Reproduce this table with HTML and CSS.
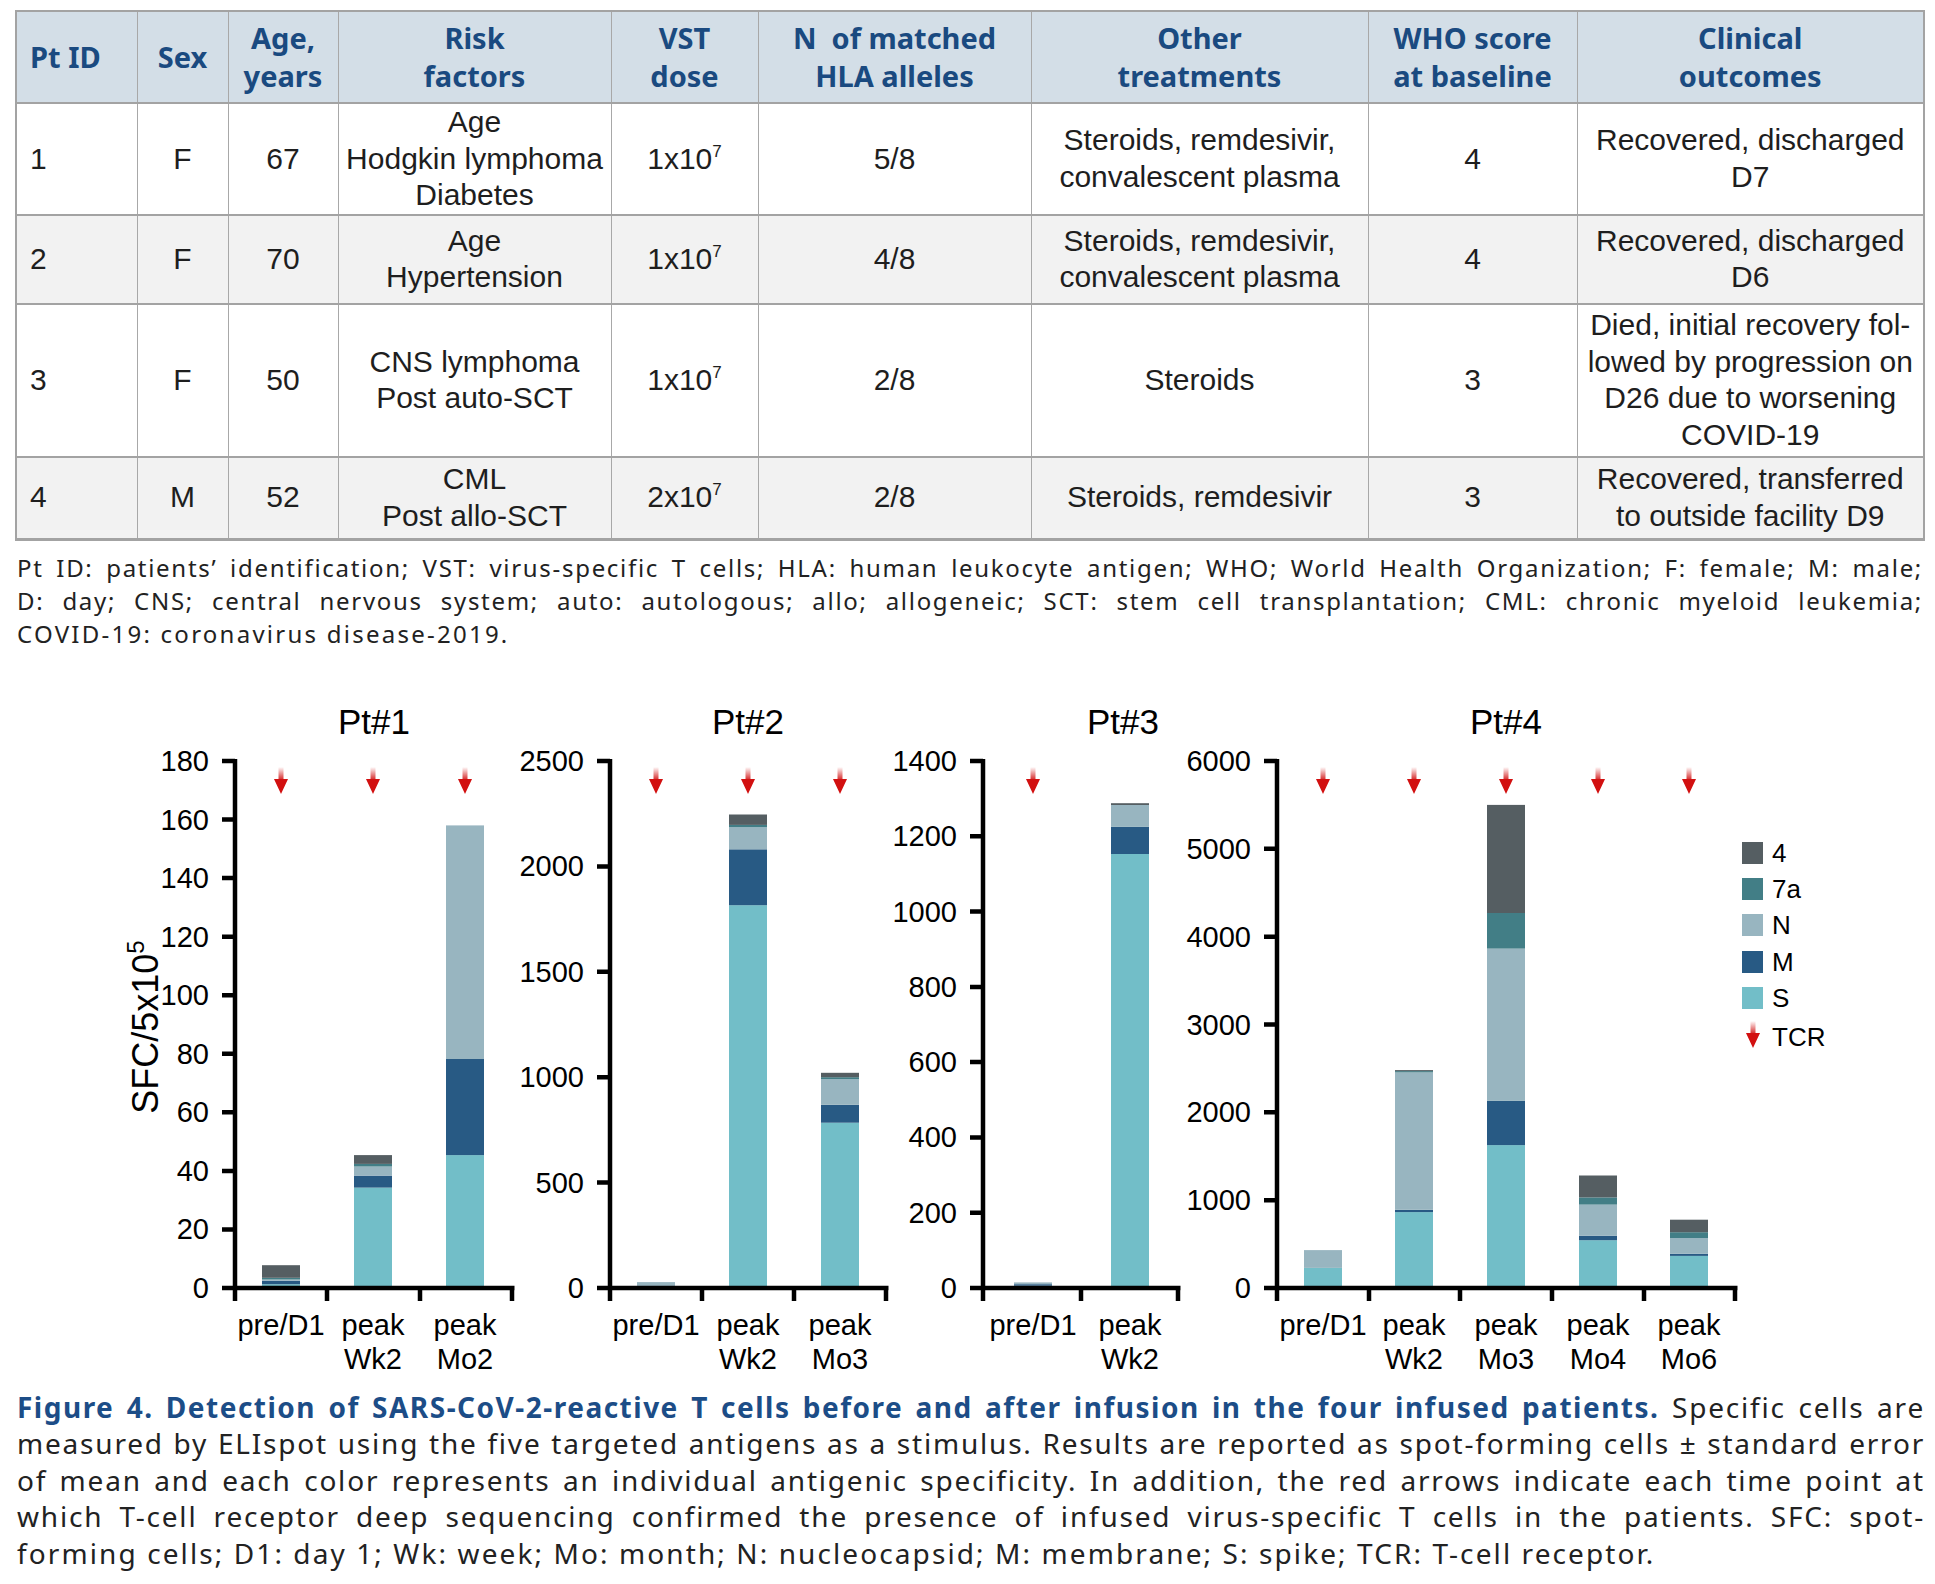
FILE: index.html
```html
<!DOCTYPE html>
<html>
<head>
<meta charset="utf-8">
<link rel="stylesheet" href="styles.css">
</head>
<body>
<div class="page">
  <table class="pt">
    <colgroup>
      <col class="w1"><col class="w2"><col class="w3"><col class="w4"><col class="w5"><col class="w6"><col class="w7"><col class="w8"><col class="w9">
    </colgroup>
    <thead>
      <tr class="hd">
        <th class="l">Pt ID</th><th>Sex</th><th>Age,<br>years</th><th>Risk<br>factors</th><th>VST<br>dose</th><th>N&nbsp; of matched<br>HLA alleles</th><th>Other<br>treatments</th><th>WHO score<br>at baseline</th><th>Clinical<br>outcomes</th>
      </tr>
    </thead>
    <tbody>
      <tr class="r1">
        <td class="l">1</td><td>F</td><td>67</td><td>Age<br>Hodgkin lymphoma<br>Diabetes</td><td>1x10<span class="sup">7</span></td><td>5/8</td><td>Steroids, remdesivir,<br>convalescent plasma</td><td>4</td><td>Recovered, discharged<br>D7</td>
      </tr>
      <tr class="r2 alt">
        <td class="l">2</td><td>F</td><td>70</td><td>Age<br>Hypertension</td><td>1x10<span class="sup">7</span></td><td>4/8</td><td>Steroids, remdesivir,<br>convalescent plasma</td><td>4</td><td>Recovered, discharged<br>D6</td>
      </tr>
      <tr class="r3">
        <td class="l">3</td><td>F</td><td>50</td><td>CNS lymphoma<br>Post auto-SCT</td><td>1x10<span class="sup">7</span></td><td>2/8</td><td>Steroids</td><td>3</td><td>Died, initial recovery fol-<br>lowed by progression on<br>D26 due to worsening<br>COVID-19</td>
      </tr>
      <tr class="r4 alt">
        <td class="l">4</td><td>M</td><td>52</td><td>CML<br>Post allo-SCT</td><td>2x10<span class="sup">7</span></td><td>2/8</td><td>Steroids, remdesivir</td><td>3</td><td>Recovered, transferred<br>to outside facility D9</td>
      </tr>
    </tbody>
  </table>

  <div class="note">
    <div class="jl">Pt ID: patients’ identification; VST: virus-specific T cells; HLA: human leukocyte antigen; WHO; World Health Organization; F: female; M: male;</div>
    <div class="jl">D: day; CNS; central nervous system; auto: autologous; allo; allogeneic; SCT: stem cell transplantation; CML: chronic myeloid leukemia;</div>
    <div class="last">COVID-19: coronavirus disease-2019.</div>
  </div>

  <figure class="fig">
    <svg class="chart" width="1935" height="700" viewBox="0 685 1935 700" xmlns="http://www.w3.org/2000/svg">
      <defs>
        <linearGradient id="ag" x1="0" y1="0" x2="0" y2="1">
          <stop offset="0" stop-color="#ffffff"/>
          <stop offset="1" stop-color="#d21414"/>
        </linearGradient>
        <g id="arw">
          <rect x="-2.5" y="0" width="5" height="14" fill="url(#ag)"/>
          <path d="M-7 12 H7 L0 27 Z" fill="#d21010"/>
        </g>
      </defs>

      <!-- Pt#1 -->
      <text class="ttl" x="374" y="734">Pt#1</text>
      <text class="ytl" transform="translate(158 1027) rotate(-90)">SFC/5x10<tspan class="ysup" dy="-14">5</tspan></text>
      <g class="bars">
        <rect class="s" x="262" y="1284.2" width="38" height="3.8"/>
        <rect class="m" x="262" y="1280.7" width="38" height="3.5"/>
        <rect class="n" x="262" y="1279.5" width="38" height="1.2"/>
        <rect class="a7" x="262" y="1277.8" width="38" height="1.7"/>
        <rect class="g4" x="262" y="1265.2" width="38" height="12.6"/>
        <rect class="s" x="354" y="1187.6" width="38" height="100.4"/>
        <rect class="m" x="354" y="1175.6" width="38" height="12"/>
        <rect class="n" x="354" y="1166.5" width="38" height="9.1"/>
        <rect class="a7" x="354" y="1163.9" width="38" height="2.6"/>
        <rect class="g4" x="354" y="1155.1" width="38" height="8.8"/>
        <rect class="s" x="446" y="1155.1" width="38" height="132.9"/>
        <rect class="m" x="446" y="1059" width="38" height="96.1"/>
        <rect class="n" x="446" y="825.4" width="38" height="233.6"/>
      </g>
      <path class="ax" d="M235 759 V1301 M222 1288 H514.5 M327 1288 V1301 M420 1288 V1301 M512 1288 V1301 M222 761 H235 M222 819.6 H235 M222 878.1 H235 M222 936.7 H235 M222 995.2 H235 M222 1053.8 H235 M222 1112.3 H235 M222 1170.9 H235 M222 1229.4 H235"/>
      <g class="tk">
        <text x="209" y="771">180</text><text x="209" y="829.6">160</text><text x="209" y="888.1">140</text><text x="209" y="946.7">120</text><text x="209" y="1005.2">100</text><text x="209" y="1063.8">80</text><text x="209" y="1122.3">60</text><text x="209" y="1180.9">40</text><text x="209" y="1239.4">20</text><text x="209" y="1298">0</text>
      </g>
      <g class="xl">
        <text x="281" y="1335">pre/D1</text>
        <text x="373" y="1335">peak</text><text x="373" y="1369">Wk2</text>
        <text x="465" y="1335">peak</text><text x="465" y="1369">Mo2</text>
      </g>
      <use href="#arw" x="281" y="767"/><use href="#arw" x="373" y="767"/><use href="#arw" x="465" y="767"/>

      <!-- Pt#2 -->
      <text class="ttl" x="748" y="734">Pt#2</text>
      <g class="bars">
        <rect class="s" x="637" y="1286.3" width="38" height="1.7"/>
        <rect class="n" x="637" y="1282.1" width="38" height="4.2"/>
        <rect class="s" x="729" y="905.2" width="38" height="382.8"/>
        <rect class="m" x="729" y="849.3" width="38" height="55.9"/>
        <rect class="n" x="729" y="827.2" width="38" height="22.1"/>
        <rect class="a7" x="729" y="824.9" width="38" height="2.3"/>
        <rect class="g4" x="729" y="814.5" width="38" height="10.4"/>
        <rect class="s" x="821" y="1122.7" width="38" height="165.3"/>
        <rect class="m" x="821" y="1104.8" width="38" height="17.9"/>
        <rect class="n" x="821" y="1079.1" width="38" height="25.7"/>
        <rect class="a7" x="821" y="1077.2" width="38" height="1.9"/>
        <rect class="g4" x="821" y="1072.8" width="38" height="4.4"/>
      </g>
      <path class="ax" d="M610 759 V1301 M597 1288 H888.5 M702 1288 V1301 M794 1288 V1301 M886 1288 V1301 M597 761 H610 M597 866.4 H610 M597 971.8 H610 M597 1077.2 H610 M597 1182.6 H610"/>
      <g class="tk">
        <text x="584" y="771">2500</text><text x="584" y="876.4">2000</text><text x="584" y="981.8">1500</text><text x="584" y="1087.2">1000</text><text x="584" y="1192.6">500</text><text x="584" y="1298">0</text>
      </g>
      <g class="xl">
        <text x="656" y="1335">pre/D1</text>
        <text x="748" y="1335">peak</text><text x="748" y="1369">Wk2</text>
        <text x="840" y="1335">peak</text><text x="840" y="1369">Mo3</text>
      </g>
      <use href="#arw" x="656" y="767"/><use href="#arw" x="748" y="767"/><use href="#arw" x="840" y="767"/>

      <!-- Pt#3 -->
      <text class="ttl" x="1123" y="734">Pt#3</text>
      <g class="bars">
        <rect class="s" x="1014" y="1285.7" width="38" height="2.3"/>
        <rect class="m" x="1014" y="1284.2" width="38" height="1.5"/>
        <rect class="n" x="1014" y="1282.4" width="38" height="1.8"/>
        <rect class="s" x="1111" y="854" width="38" height="434"/>
        <rect class="m" x="1111" y="826.9" width="38" height="27.1"/>
        <rect class="n" x="1111" y="805" width="38" height="21.9"/>
        <rect class="g4" x="1111" y="803.2" width="38" height="1.8"/>
      </g>
      <path class="ax" d="M983 759 V1301 M970 1288 H1180.5 M1081 1288 V1301 M1178 1288 V1301 M970 761 H983 M970 836.3 H983 M970 911.6 H983 M970 986.9 H983 M970 1062.1 H983 M970 1137.4 H983 M970 1212.7 H983"/>
      <g class="tk">
        <text x="957" y="771">1400</text><text x="957" y="846.3">1200</text><text x="957" y="921.6">1000</text><text x="957" y="996.9">800</text><text x="957" y="1072.1">600</text><text x="957" y="1147.4">400</text><text x="957" y="1222.7">200</text><text x="957" y="1298">0</text>
      </g>
      <g class="xl">
        <text x="1033" y="1335">pre/D1</text>
        <text x="1130" y="1335">peak</text><text x="1130" y="1369">Wk2</text>
      </g>
      <use href="#arw" x="1033" y="767"/>

      <!-- Pt#4 -->
      <text class="ttl" x="1506" y="734">Pt#4</text>
      <g class="bars">
        <rect class="s" x="1304" y="1267.9" width="38" height="20.1"/>
        <rect class="n" x="1304" y="1250.1" width="38" height="17.8"/>
        <rect class="s" x="1395" y="1212.1" width="38" height="75.9"/>
        <rect class="m" x="1395" y="1209.8" width="38" height="2.3"/>
        <rect class="n" x="1395" y="1072.4" width="38" height="137.4"/>
        <rect class="a7" x="1395" y="1071.1" width="38" height="1.3"/>
        <rect class="g4" x="1395" y="1070.1" width="38" height="1"/>
        <rect class="s" x="1487" y="1145.1" width="38" height="142.9"/>
        <rect class="m" x="1487" y="1100.9" width="38" height="44.2"/>
        <rect class="n" x="1487" y="948.6" width="38" height="152.3"/>
        <rect class="a7" x="1487" y="913" width="38" height="35.6"/>
        <rect class="g4" x="1487" y="804.9" width="38" height="108.1"/>
        <rect class="s" x="1579" y="1240.2" width="38" height="47.8"/>
        <rect class="m" x="1579" y="1235.7" width="38" height="4.5"/>
        <rect class="n" x="1579" y="1204.6" width="38" height="31.1"/>
        <rect class="a7" x="1579" y="1197.4" width="38" height="7.2"/>
        <rect class="g4" x="1579" y="1175.5" width="38" height="21.9"/>
        <rect class="s" x="1670" y="1255.9" width="38" height="32.1"/>
        <rect class="m" x="1670" y="1253.7" width="38" height="2.2"/>
        <rect class="n" x="1670" y="1238" width="38" height="15.7"/>
        <rect class="a7" x="1670" y="1232.2" width="38" height="5.8"/>
        <rect class="g4" x="1670" y="1219.7" width="38" height="12.5"/>
      </g>
      <path class="ax" d="M1277 759 V1301 M1264 1288 H1737.5 M1369 1288 V1301 M1460 1288 V1301 M1552 1288 V1301 M1644 1288 V1301 M1735 1288 V1301 M1264 761 H1277 M1264 848.8 H1277 M1264 936.7 H1277 M1264 1024.5 H1277 M1264 1112.3 H1277 M1264 1200.2 H1277"/>
      <g class="tk">
        <text x="1251" y="771">6000</text><text x="1251" y="858.8">5000</text><text x="1251" y="946.7">4000</text><text x="1251" y="1034.5">3000</text><text x="1251" y="1122.3">2000</text><text x="1251" y="1210.2">1000</text><text x="1251" y="1298">0</text>
      </g>
      <g class="xl">
        <text x="1323" y="1335">pre/D1</text>
        <text x="1414" y="1335">peak</text><text x="1414" y="1369">Wk2</text>
        <text x="1506" y="1335">peak</text><text x="1506" y="1369">Mo3</text>
        <text x="1598" y="1335">peak</text><text x="1598" y="1369">Mo4</text>
        <text x="1689" y="1335">peak</text><text x="1689" y="1369">Mo6</text>
      </g>
      <use href="#arw" x="1323" y="767"/><use href="#arw" x="1414" y="767"/><use href="#arw" x="1506" y="767"/><use href="#arw" x="1598" y="767"/><use href="#arw" x="1689" y="767"/>

      <!-- legend -->
      <g class="lg">
        <rect class="g4" x="1742" y="842" width="21" height="22"/><text x="1772" y="862">4</text>
        <rect class="a7" x="1742" y="878" width="21" height="22"/><text x="1772" y="898">7a</text>
        <rect class="n" x="1742" y="914" width="21" height="22"/><text x="1772" y="934">N</text>
        <rect class="m" x="1742" y="951" width="21" height="22"/><text x="1772" y="971">M</text>
        <rect class="s" x="1742" y="987" width="21" height="22"/><text x="1772" y="1007">S</text>
        <use href="#arw" x="1753" y="1021"/><text x="1772" y="1046">TCR</text>
      </g>
    </svg>
  </figure>

  <div class="cap">
    <div class="jl"><b>Figure 4. Detection of SARS-CoV-2-reactive T cells before and after infusion in the four infused patients.</b> Specific cells are</div>
    <div class="jl">measured by ELIspot using the five targeted antigens as a stimulus. Results are reported as spot-forming cells ± standard error</div>
    <div class="jl">of mean and each color represents an individual antigenic specificity. In addition, the red arrows indicate each time point at</div>
    <div class="jl">which T-cell receptor deep sequencing confirmed the presence of infused virus-specific T cells in the patients. SFC: spot-</div>
    <div class="last">forming cells; D1: day 1; Wk: week; Mo: month; N: nucleocapsid; M: membrane; S: spike; TCR: T-cell receptor.</div>
  </div>
</div>
</body>
</html>
```

FILE: styles.css
```css
html, body {
  margin: 0;
  padding: 0;
  background: #ffffff;
}

.page {
  width: 1908px;
  padding: 10px 0 0 15px;
}

/* ---------- table ---------- */
.pt {
  width: 1908px;
  table-layout: fixed;
  border-collapse: collapse;
  border: 2px solid #a3a3a3;
  border-bottom-width: 3px;
}
.w1 { width: 121px; }
.w2 { width: 91px; }
.w3 { width: 110px; }
.w4 { width: 273px; }
.w5 { width: 147px; }
.w6 { width: 273px; }
.w7 { width: 337px; }
.w8 { width: 209px; }
.w9 { width: 347px; }

.pt th,
.pt td {
  border-left: 1px solid #a8a8a8;
  border-right: 1px solid #a8a8a8;
  border-top: 2px solid #a3a3a3;
  border-bottom: 2px solid #a3a3a3;
  padding: 0 4px;
  text-align: center;
  vertical-align: middle;
  white-space: nowrap;
}
.pt th {
  background: #d3dee7;
  color: #1a4a80;
  font-family: "Noto Sans", "Open Sans", sans-serif;
  font-weight: 700;
  font-size: 29px;
  line-height: 38px;
  height: 90px;
}
.pt td {
  font-family: "Liberation Sans", Arial, sans-serif;
  font-size: 30px;
  line-height: 36.5px;
  color: #1e1e1e;
}
.pt .l {
  text-align: left;
  padding-left: 13px;
}
.pt .r1 td { height: 108px; }
.pt .r2 td { height: 87px; }
.pt .r3 td { height: 151px; }
.pt .r4 td { height: 80px; }
.pt .alt td { background: #f2f2f2; }

.sup {
  font-size: 17px;
  vertical-align: 12px;
  line-height: 0;
}

/* ---------- notes ---------- */
.note {
  margin-top: 10px;
  margin-left: 2px;
  width: 1906px;
  font-family: "Noto Sans", sans-serif;
  font-size: 24px;
  line-height: 33px;
  letter-spacing: 1.7px;
  color: #222222;
}
.note .last {
  letter-spacing: 2.25px;
}
.jl {
  text-align: justify;
  text-align-last: justify;
}

/* ---------- figure ---------- */
.fig {
  margin: 35px 0 0 -15px;
  width: 1935px;
  height: 700px;
}
.chart {
  display: block;
  font-family: "Liberation Sans", Arial, sans-serif;
}
.chart .ttl { font-size: 35px; text-anchor: middle; fill: #000; }
.chart .ytl { font-size: 36px; text-anchor: middle; fill: #000; }
.chart .ysup { font-size: 24px; }
.chart .tk text { font-size: 29px; text-anchor: end; fill: #000; }
.chart .xl text { font-size: 29px; text-anchor: middle; fill: #000; }
.chart .lg text { font-size: 26px; fill: #000; }
.chart .ax { fill: none; stroke: #000; stroke-width: 4.5; }
.chart .s { fill: #72bec8; }
.chart .m { fill: #285a84; }
.chart .n { fill: #98b5c0; }
.chart .a7 { fill: #427e86; }
.chart .g4 { fill: #555e62; }

/* ---------- caption ---------- */
.cap {
  margin-top: 4px;
  margin-left: 2px;
  width: 1908px;
  font-family: "Noto Sans", sans-serif;
  font-size: 28px;
  line-height: 36.5px;
  letter-spacing: 1.8px;
  color: #222222;
}
.cap .last {
  letter-spacing: 2.1px;
}
.cap b {
  color: #1c4d87;
  font-weight: 700;
  letter-spacing: 1.5px;
}
```
